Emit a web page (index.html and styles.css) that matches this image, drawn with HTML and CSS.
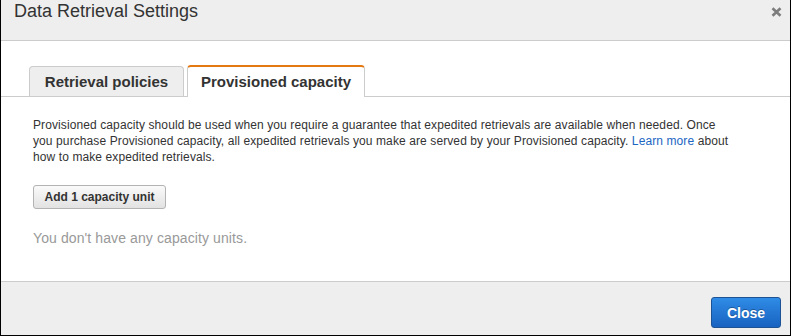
FILE: index.html
```html
<!DOCTYPE html>
<html>
<head>
<meta charset="utf-8">
<link rel="stylesheet" href="styles.css">
</head>
<body>
<div class="dialog">
  <div class="header">
    <div class="title">Data Retrieval Settings</div>
    <svg class="close-x" width="11" height="10" viewBox="0 0 11 10"><path d="M1.5 1.2 L9.5 8.8 M9.5 1.2 L1.5 8.8" stroke="#7d7d7d" stroke-width="2.6" stroke-linecap="butt"/></svg>
  </div>
  <div class="body">
    <div class="tabs">
      <div class="tab tab-policies">Retrieval policies</div>
      <div class="tab tab-capacity active">Provisioned capacity</div>
    </div>
    <p class="desc">Provisioned capacity should be used when you require a guarantee that expedited retrievals are available when needed. Once you purchase Provisioned capacity, all expedited retrievals you make are served by your Provisioned capacity. <a class="link" href="#">Learn more</a> about how to make expedited retrievals.</p>
    <button class="btn">Add 1 capacity unit</button>
    <div class="empty">You don't have any capacity units.</div>
  </div>
  <div class="footer">
    <button class="btn-primary">Close</button>
  </div>
</div>
</body>
</html>
```

FILE: styles.css
```css
html, body {
  margin: 0;
  padding: 0;
  background: #fff;
}
body {
  font-family: "Liberation Sans", Arial, sans-serif;
  color: #333;
}
.dialog {
  width: 791px;
  height: 336px;
  box-sizing: border-box;
  border: 1px solid #000;
  border-top: none;
  display: flex;
  flex-direction: column;
  background: #fff;
}
.header {
  height: 40px;
  background: #eeeeee;
  border-bottom: 1px solid #cccccc;
  display: flex;
  justify-content: space-between;
  align-items: flex-start;
  padding: 0 8px 0 13px;
  flex-shrink: 0;
}
.title {
  font-size: 18px;
  line-height: 22px;
  color: #333;
}
.close-x {
  margin-top: 7px;
}
.body {
  flex: 1;
}
.tabs {
  margin-top: 24px;
  display: flex;
  align-items: flex-end;
  gap: 3px;
  padding-left: 28px;
  border-bottom: 1px solid #cccccc;
}
.tab {
  box-sizing: border-box;
  font-size: 15px;
  font-weight: bold;
  color: #333;
  text-align: center;
  white-space: nowrap;
  line-height: 29px;
  height: 30px;
  background: #eeeeee;
  border: 1px solid #cccccc;
  border-bottom: none;
  border-radius: 4px 4px 0 0;
}
.tab-policies {
  width: 155px;
}
.tab-capacity {
  width: 178px;
}
.tab.active {
  background: #fff;
  border-top: 2px solid #e47911;
  height: 32px;
  margin-bottom: -1px;
}
.desc {
  margin: 20px 0 0 32px;
  max-width: 702px;
  font-size: 12px;
  letter-spacing: 0.1px;
  line-height: 16px;
  color: #333;
}
.link {
  color: #1a66c2;
  text-decoration: none;
}
.btn {
  display: block;
  margin: 20px 0 0 32px;
  height: 24px;
  width: 133px;
  padding: 0;
  font-family: "Liberation Sans", Arial, sans-serif;
  font-size: 12px;
  font-weight: bold;
  color: #333;
  background: linear-gradient(#fafafa, #e2e2e2);
  border: 1px solid #b3b3b3;
  border-radius: 3px;
}
.empty {
  margin: 21px 0 0 32px;
  font-size: 14px;
  letter-spacing: 0.1px;
  line-height: 17px;
  color: #999;
}
.footer {
  flex-shrink: 0;
  background: #eeeeee;
  border-top: 1px solid #cccccc;
  display: flex;
  justify-content: flex-end;
  align-items: flex-start;
  padding: 15px 9px 0 0;
  box-sizing: border-box;
  height: 54px;
}
.btn-primary {
  width: 70px;
  height: 31px;
  padding: 0;
  font-family: "Liberation Sans", Arial, sans-serif;
  font-size: 14px;
  font-weight: bold;
  color: #fff;
  text-shadow: 0 -1px 0 rgba(0,0,0,0.3);
  background: linear-gradient(#2f8ce6, #1862c0);
  border: 1px solid #1d5294;
  border-radius: 3px;
}
```
